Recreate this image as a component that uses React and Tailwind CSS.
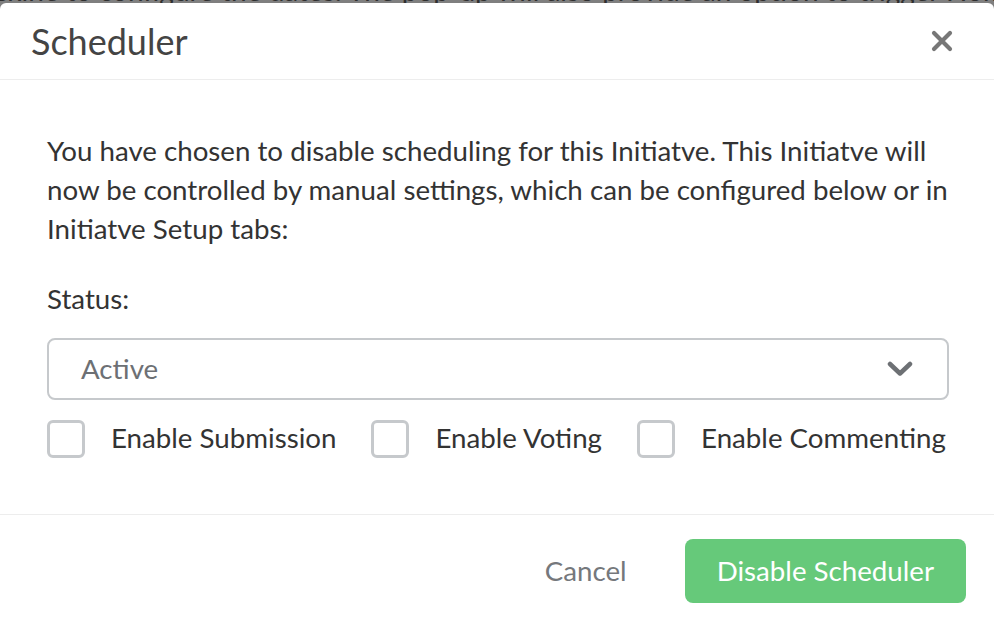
import React from "react";

function Checkbox({ label }) {
  return (
    <label className="flex items-center shrink-0">
      <span className="w-[38px] h-[38px] rounded-[6px] border-[3px] border-[#c6c9cc] bg-white shrink-0" />
      <span className="ml-[26px] pb-[3px] text-[27.7px] leading-[39px] text-[#333] whitespace-nowrap">{label}</span>
    </label>
  );
}

export default function App() {
  return (
    <div
      className="w-full h-[624px] bg-[#7f7f7f] overflow-hidden flex flex-col"
      style={{ fontFamily: "Lato, 'Open Sans', sans-serif" }}
    >
      <div className="h-[3px] overflow-hidden shrink-0">
        <div className="whitespace-nowrap text-[28px] leading-[30px] text-[#2f2f2f] -mt-[25px] -ml-[6px]">
          ckine to configure the dates. The pop-up will also provide an option to trigger Home page
        </div>
      </div>
      <div className="flex-1 bg-white rounded-t-[6px] flex flex-col">
        <div className="h-[77px] px-[31px] flex items-center justify-between border-b border-[#ededed]">
          <h1 className="text-[36px] leading-none text-[#444]">Scheduler</h1>
          <svg width="22" height="22" viewBox="0 0 22 22" className="mr-[10px]">
            <path d="M3 3 L19 19 M19 3 L3 19" stroke="#777" strokeWidth="4.2" strokeLinecap="round" />
          </svg>
        </div>
        <div className="pl-[47px] pr-[45px] pt-[51px] pb-[54px] border-b border-[#ededed]">
          <p className="text-[27.7px] leading-[39px] text-[#333]">
            You have chosen to disable scheduling for this Initiatve. This Initiatve will now be controlled by manual settings, which can be configured below or in Initiatve Setup tabs:
          </p>
          <div className="mt-[31px] text-[27.7px] leading-[39px] text-[#333]">Status:</div>
          <div className="mt-[20px] h-[62px] rounded-[8px] border-2 border-[#c6c9cc] flex items-center justify-between pl-[32px] pr-[34px]">
            <span className="text-[27.7px] text-[#6d7074]">Active</span>
            <svg width="26" height="16" viewBox="0 0 26 16">
              <path d="M3 3 L13 12.5 L23 3" stroke="#6d7074" strokeWidth="4.5" fill="none" strokeLinecap="round" strokeLinejoin="round" />
            </svg>
          </div>
          <div className="mt-[18px] flex items-center gap-[35px]">
            <Checkbox label="Enable Submission" />
            <Checkbox label="Enable Voting" />
            <Checkbox label="Enable Commenting" />
          </div>
        </div>
        <div className="flex items-center justify-end pt-[24px] pr-[28px] gap-[58px]">
          <button className="text-[27.7px] text-[#75787c]">Cancel</button>
          <button className="h-[64px] px-[32px] rounded-[8px] bg-[#66c97a] text-white text-[27.7px] whitespace-nowrap">
            Disable Scheduler
          </button>
        </div>
      </div>
    </div>
  );
}
